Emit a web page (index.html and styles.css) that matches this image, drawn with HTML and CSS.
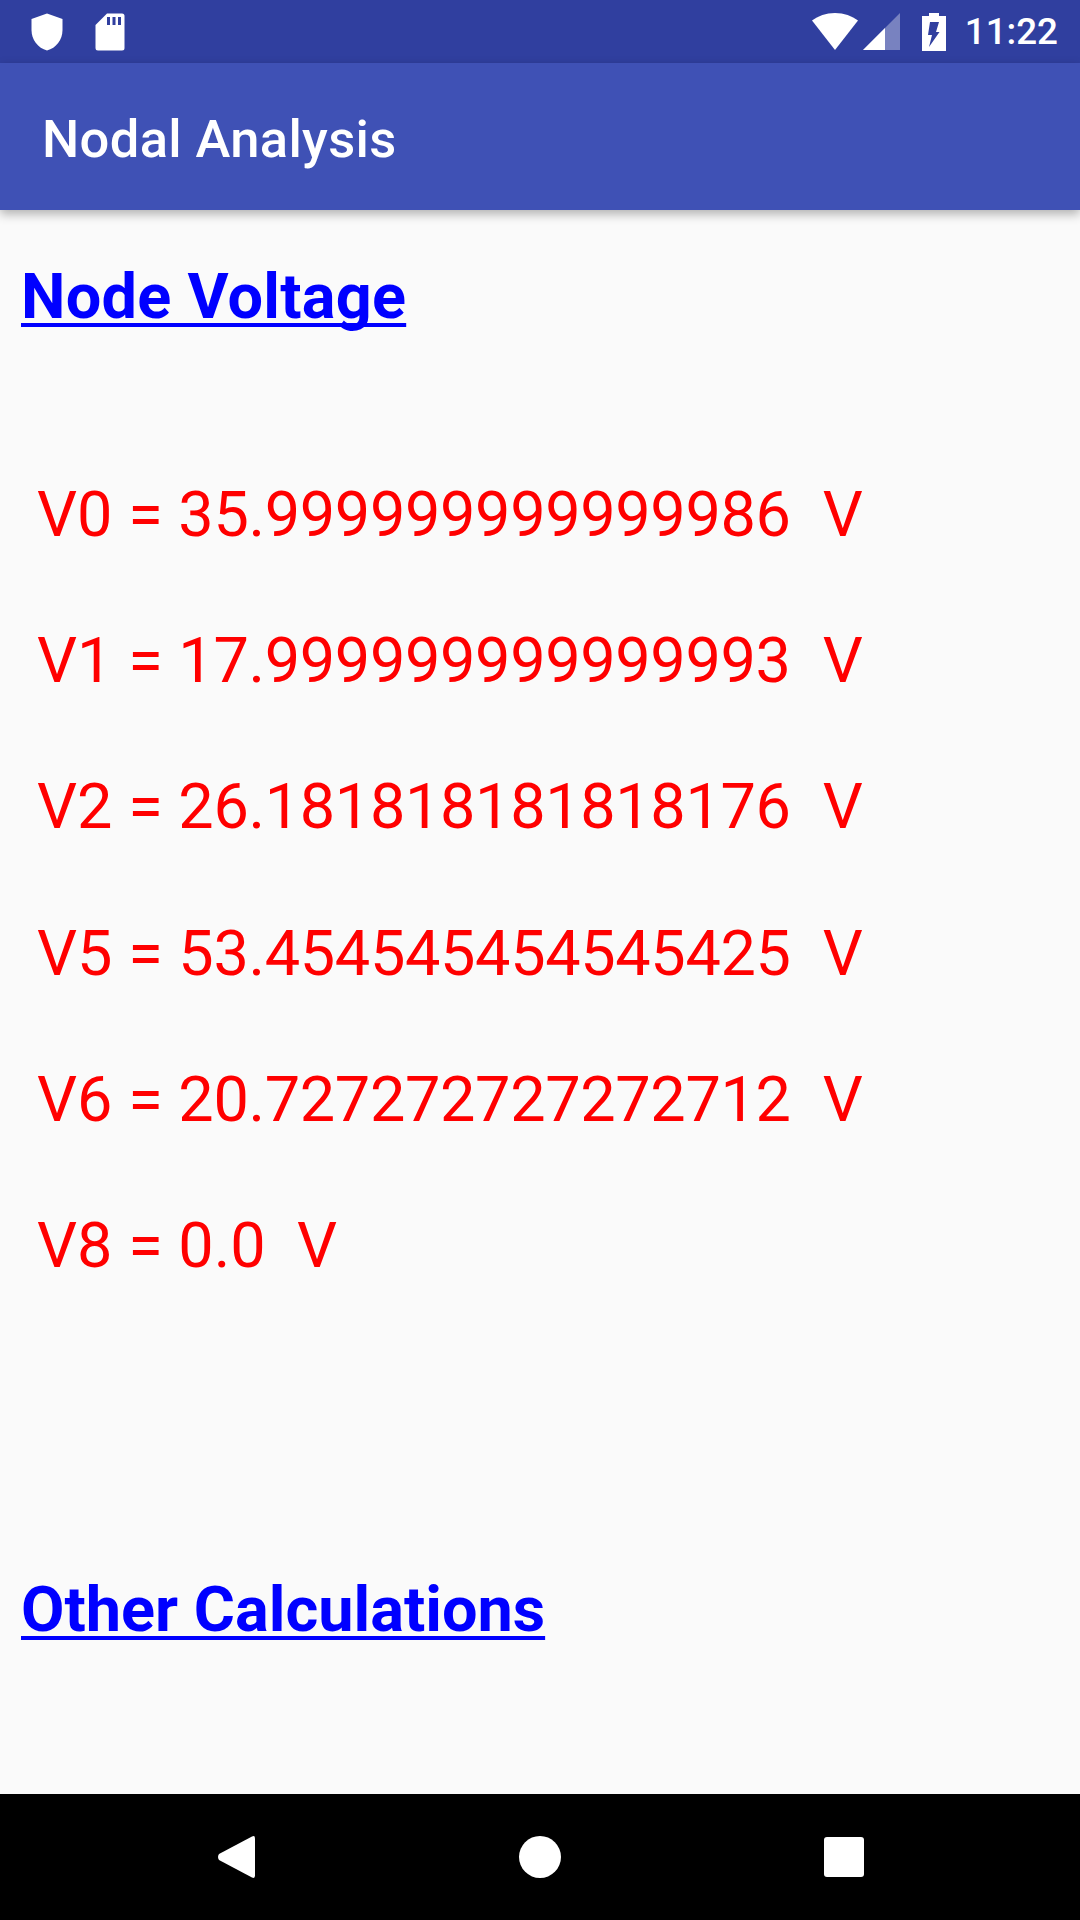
FILE: index.html
```html
<!DOCTYPE html>
<html lang="en">
<head>
<meta charset="utf-8">
<title>Nodal Analysis</title>
<link rel="stylesheet" href="styles.css">
</head>
<body>
<div class="screen">
  <div class="status">
    <div class="status-left">
      <svg class="ic-shield" viewBox="0 0 32 38"><path d="M16 0.5 L31.5 6 V17 C31.5 27 25 35 16 37.5 C7 35 0.5 27 0.5 17 V6 Z" fill="#fff"/></svg>
      <svg class="ic-sd" viewBox="0 0 30 38"><path d="M12 0.5 H27 A2.5 2.5 0 0 1 29.5 3 V35 A2.5 2.5 0 0 1 27 37.5 H3 A2.5 2.5 0 0 1 0.5 35 V12 Z" fill="#fff"/><path d="M12 4 h3 v8 h-3z M17.500 4 h3 v8 h-3z M23 4 h3 v8 h-3z" fill="#303f9f"/></svg>
    </div>
    <div class="status-right">
      <svg class="ic-wifi" viewBox="0 0 46 37"><path d="M23 37 L0 7.500 C6 3 14 0 23 0 C32 0 40 3 46 7.500 Z" fill="#fff"/></svg>
      <svg class="ic-signal" viewBox="0 0 37 37"><path d="M0 37 L37 0 V37 Z" fill="#fff" fill-opacity="0.35"/><path d="M0 37 L22 15 V37 Z" fill="#fff"/></svg>
      <svg class="ic-batt" viewBox="0 0 24 38"><path fill-rule="evenodd" d="M7 0 H17 V3 H24 V38 H0 V3 H7 Z M8 9 H17 L14 19 H17.500 L7 34 L10 22 H6 Z" fill="#fff"/></svg>
      <span class="clock">11:22</span>
    </div>
  </div>
  <header class="appbar">Nodal Analysis</header>
  <main class="content">
    <h2 class="link-head">Node Voltage</h2>
    <ul class="values">
      <li>V0 = <span class="num">35.999999999999986</span>&nbsp; V</li>
      <li>V1 = <span class="num">17.999999999999993</span>&nbsp; V</li>
      <li>V2 = <span class="num">26.181818181818176</span>&nbsp; V</li>
      <li>V5 = <span class="num">53.454545454545425</span>&nbsp; V</li>
      <li>V6 = <span class="num">20.727272727272712</span>&nbsp; V</li>
      <li>V8 = 0.0&nbsp; V</li>
    </ul>
    <h2 class="link-head other">Other Calculations</h2>
  </main>
  <nav class="navbar">
    <svg class="ic-back" viewBox="0 0 38 44"><path d="M35 1.500 Q38 0 38 3.500 V40.500 Q38 44 35 42.500 L2 25 Q0 22 2 19 Z" fill="#fff"/></svg>
    <svg class="ic-home" viewBox="0 0 42 42"><circle cx="21" cy="21" r="21" fill="#fff"/></svg>
    <svg class="ic-recent" viewBox="0 0 40 40"><rect width="40" height="40" rx="3" fill="#fff"/></svg>
  </nav>
</div>
</body>
</html>
```
FILE: styles.css
```css
* { box-sizing: border-box; }
html, body { margin: 0; padding: 0; }
body { width: 1080px; height: 1920px; overflow: hidden; font-family: Roboto, sans-serif; background: #fafafa; }
.screen { width: 1080px; height: 1920px; display: flex; flex-direction: column; }
.status { height: 63px; flex: none; background: #303f9f; display: flex; justify-content: space-between; align-items: center; padding: 0 22px 0 31px; }
.status-left { display: flex; align-items: center; gap: 32px; }
.ic-shield { width: 32px; height: 38px; display: block; }
.ic-sd { width: 30px; height: 38px; display: block; }
.status-right { display: flex; align-items: center; }
.ic-wifi { width: 46px; height: 37px; display: block; margin-right: 5px; }
.ic-signal { width: 37px; height: 37px; display: block; margin-right: 22px; }
.ic-batt { width: 24px; height: 38px; display: block; margin-right: 19px; }
.clock { color: #fff; font-size: 36.75px; font-weight: 500; line-height: 40px; }
.appbar { height: 147px; flex: none; background: #3f51b5; color: #fff; font-size: 52.5px; font-weight: 500; letter-spacing: 0.35px; line-height: 142px; padding: 5px 0 0 42px; box-shadow: 0 4px 10px rgba(0,0,0,0.3); position: relative; }
.content { flex: 1; padding: 0 21px; }
.link-head { margin: 0; font-size: 63px; font-weight: 700; letter-spacing: 0.25px; line-height: 74px; color: #0000ff; text-decoration: underline; text-decoration-thickness: 4px; text-underline-offset: 5px; text-decoration-skip-ink: none; }
.content > .link-head:first-child { margin-top: 50px; }
.values { list-style: none; margin: 144px 0 0; padding: 0 0 0 16px; }
.values li { font-size: 63px; line-height: 74px; color: #ff0000; margin-bottom: 72.2px; }
.num { letter-spacing: -0.35px; margin-right: 1px; }
.other { margin-top: 290.5px; letter-spacing: 0; }
.navbar { height: 126px; flex: none; background: #000; display: flex; align-items: center; position: relative; padding-left: 217px; }
.ic-back { width: 38px; height: 44px; display: block; margin-right: 264px; }
.ic-home { width: 42px; height: 42px; display: block; margin-right: 263px; }
.ic-recent { width: 40px; height: 40px; display: block; }
```
